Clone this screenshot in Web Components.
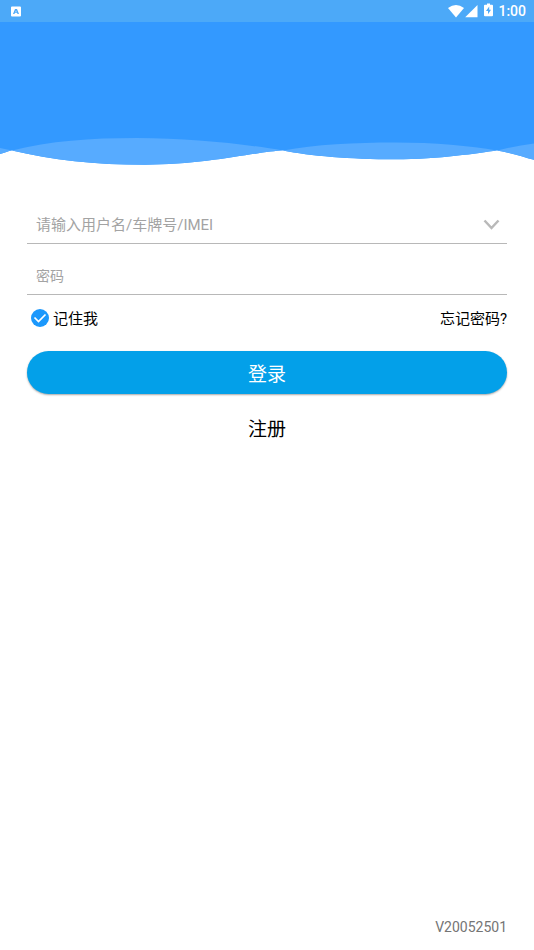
<!DOCTYPE html>
<html lang="zh-CN">
<head>
<meta charset="utf-8">
<meta name="viewport" content="width=device-width, initial-scale=1">
<title>登录</title>
<style>
html, body { margin: 0; min-height: 100%; }
body { background: #fff; color: #000; font-family: Roboto, "Noto Sans CJK SC", sans-serif; font-size: 15px; }
</style>
</head>
<body>
<login-page>
  <status-bar slot="status">1:00</status-bar>
  <text-field name="account" hint="请输入用户名/车牌号/IMEI"><drop-toggle></drop-toggle></text-field>
  <text-field name="password" type="password" hint="密码"></text-field>
  <option-row><remember-check>记住我</remember-check><text-link slot="end" href="#forgot">忘记密码?</text-link></option-row>
  <primary-button>登录</primary-button>
  <text-link large href="#register">注册</text-link>
  <span slot="version">V20052501</span>
</login-page>
<script>
const define = (name, html, setup) => {
  const template = document.createElement('template');
  template.innerHTML = html;
  customElements.define(name, class extends HTMLElement {
    constructor() {
      super();
      this.attachShadow({ mode: 'open' }).append(template.content.cloneNode(true));
    }
    connectedCallback() { if (setup) setup(this, this.shadowRoot); }
  });
};

define('status-bar', `
<style>
:host { display: flex; align-items: center; height: 22px; padding: 0 8px 0 11px; background: #4ca9f8; color: #fff; font-size: 14px; font-weight: 500; line-height: 22px; }
svg { display: block; flex: none; }
.signals { margin-left: auto; display: flex; align-items: center; gap: 1px; }
.battery { margin: 0 4px 2px 5px; }
</style>
<svg width="10" height="11" viewBox="0 0 10 11" aria-hidden="true"><path fill="#fff" fill-rule="evenodd" d="M1 .5h8q1 0 1 1v8q0 1-1 1H1q-1 0-1-1v-8q0-1 1-1zM4 3L2 8h1.500l.4-1.200h2.200L6.500 8H8L6 3zM5 4.200l.6 1.500H4.400z"/></svg>
<div class="signals">
<svg width="16" height="14" viewBox="0 0 16 14" aria-hidden="true"><path fill="#fff" d="M0 4Q8-2 16 4L8 13.500z"/></svg>
<svg width="13" height="14" viewBox="0 0 13 14" aria-hidden="true"><path fill="#fff" d="M12.500 1v12.300H.2z"/></svg>
<svg class="battery" width="9" height="14" viewBox="0 0 9 14" aria-hidden="true"><path fill="#fff" fill-rule="evenodd" d="M3 .5h3v1.300h2q1 0 1 1v9.500q0 1-1 1H1q-1 0-1-1V2.800q0-1 1-1h2zM5.200 3.500L2 8h2v3.300L7 6.800H5.200z"/></svg>
<span><slot></slot></span>
</div>`);

define('wave-header', `
<style>
:host { display: block; background: #3399ff; }
.fill { height: 108px; }
svg { display: block; width: 100%; height: 40px; }
</style>
<slot></slot>
<div class="fill"></div>
<svg viewBox="0 130 534 40" preserveAspectRatio="none" aria-hidden="true">
<path fill="#fff" d="M0 154C5 153 8 151 12 150.500C52 160 95 164.800 145 164.800C207 164.800 260 151 283 150.500C310 156 350 159.300 395 159.300C440 159.300 478 153 497 150.500C512 153 523 157 534 159.800V170H0z"/>
<path fill="#57abff" d="M0 148Q6 149 12 150.500C50 141 90 138 137 138C190 138 245 144 283 150.500C315 144.500 355 142.500 395 142.500C435 142.500 470 146 497 150.500Q515 146 534 143.500V159.800C523 157 512 153 497 150.500C478 153 440 159.300 395 159.300C350 159.300 310 156 283 150.500C260 151 207 164.800 145 164.800C95 164.800 52 160 12 150.500C8 151 5 153 0 154z"/>
</svg>`);

define('text-field', `
<style>
:host { display: flex; align-items: center; height: 37px; border-bottom: 1px solid #b8b8b8; padding: 0 7px 0 9px; }
input { flex: 1; min-width: 0; height: 36px; box-sizing: border-box; border: 0; padding: 0; margin: 0; outline: 0; background: transparent; font: inherit; color: #000; }
input[type=password] { font-size: 14px; }
input::placeholder { color: #a3a3a3; opacity: 1; }
</style>
<input><slot></slot>`, (host, root) => {
  const input = root.querySelector('input');
  input.type = host.getAttribute('type') || 'text';
  input.name = host.getAttribute('name');
  input.placeholder = host.getAttribute('hint');
  input.setAttribute('aria-label', host.getAttribute('hint'));
});

define('drop-toggle', `
<style>
:host { display: block; }
button { display: block; border: 0; padding: 0; background: none; cursor: pointer; }
svg { display: block; }
</style>
<button type="button" aria-label="展开账号列表"><svg width="17" height="12" viewBox="0 0 17 12"><path d="M1.500 1.500l7 7.500 7-7.500" fill="none" stroke="#b9b9b9" stroke-width="2.500"/></svg></button>`);

define('option-row', `
<style>:host { display: flex; justify-content: space-between; align-items: center; height: 24px; padding-left: 4px; }</style>
<slot></slot><slot name="end"></slot>`);

define('remember-check', `
<style>
:host { display: block; }
label { display: flex; align-items: center; gap: 4px; line-height: 24px; cursor: pointer; }
.box { display: grid; padding-bottom: 2px; }
input, svg { grid-area: 1 / 1; width: 18px; height: 18px; margin: 0; }
input { appearance: none; box-sizing: border-box; border: 1px solid #b8b8b8; border-radius: 50%; }
input:checked { border: 0; background: #1b98fc; }
svg { pointer-events: none; }
</style>
<label><span class="box"><input type="checkbox" checked><svg viewBox="0 0 18 18" aria-hidden="true"><path d="M3.500 8.500l4 4 7-7" fill="none" stroke="#fff" stroke-width="1.700"/></svg></span><span><slot></slot></span></label>`);

define('text-link', `
<style>
:host { display: block; line-height: 24px; }
:host([large]) { font-size: 19px; text-align: center; }
a { color: inherit; text-decoration: none; }
</style>
<a><slot></slot></a>`, (host, root) => { root.querySelector('a').href = host.getAttribute('href'); });

define('primary-button', `
<style>
:host { display: block; }
button { display: block; width: 100%; height: 43px; border: 0; border-radius: 22px; padding: 0; background: #03a0e9; color: #fff; font: inherit; font-size: 19px; box-shadow: 0 1px 2px rgba(0,0,0,.35); cursor: pointer; }
</style>
<button type="submit"><slot></slot></button>`);

define('login-page', `
<style>
:host { display: flex; flex-direction: column; min-height: 100vh; }
form { display: flex; flex-direction: column; gap: 13px; padding: 36px 27px 24px; }
::slotted(option-row) { margin-top: -1px; }
::slotted(primary-button) { margin-top: 7px; }
::slotted(text-link[large]) { margin-top: 11px; }
footer { margin-top: auto; padding: 0 27px 11px; text-align: right; color: #757575; font-size: 14px; line-height: 24px; }
</style>
<wave-header><slot name="status"></slot></wave-header>
<form><slot></slot></form>
<footer><slot name="version"></slot></footer>`);
</script>
</body>
</html>
